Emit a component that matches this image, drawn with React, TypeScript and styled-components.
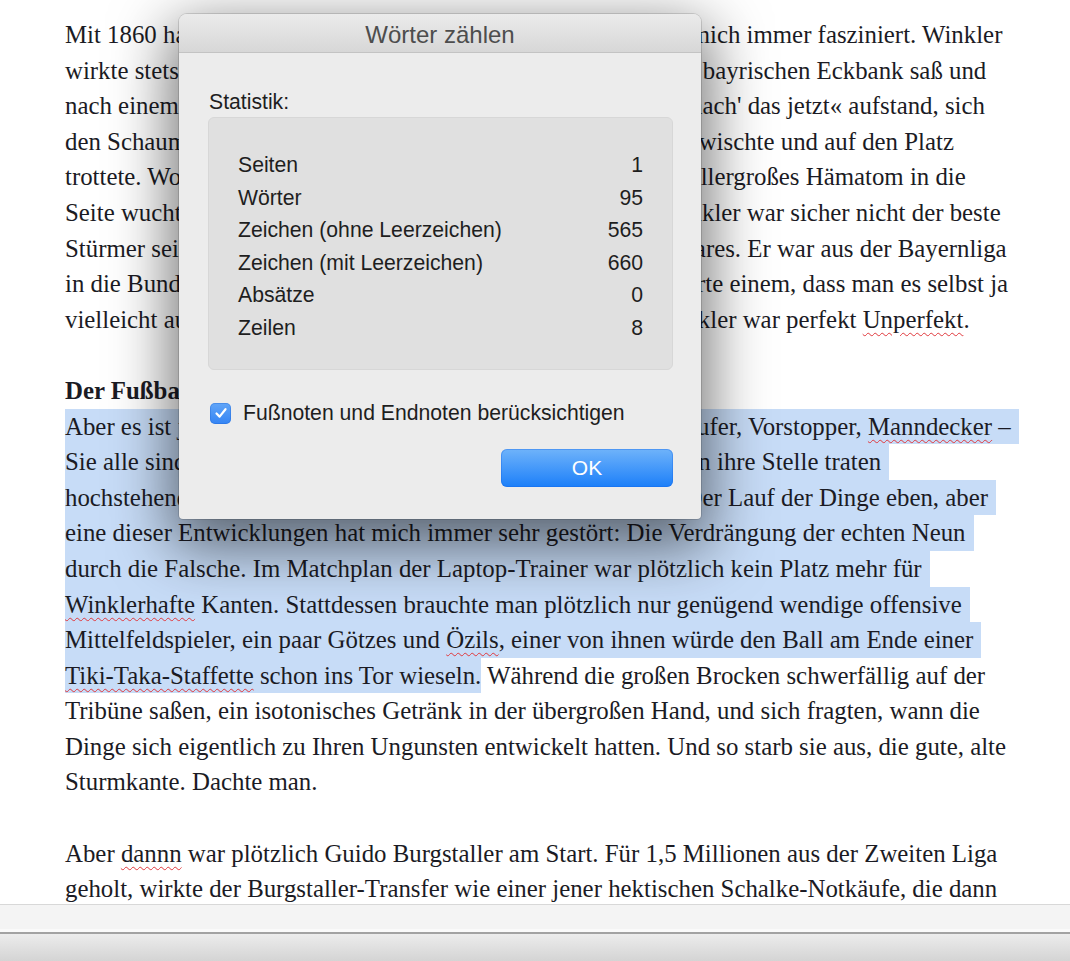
import React from "react";
import styled, { createGlobalStyle } from "styled-components";

const GlobalStyle = createGlobalStyle`
  html, body {
    margin: 0;
    padding: 0;
    background: #fff;
  }
  body {
    width: 1070px;
    height: 961px;
    overflow: hidden;
  }
`;

const Window = styled.div`
  position: relative;
  width: 1070px;
  height: 961px;
  display: flex;
  flex-direction: column;
  background: #fff;
  overflow: hidden;
`;

const Page = styled.div`
  flex: 0 0 905px;
  box-sizing: border-box;
  overflow: hidden;
  padding: 17px 0 0 65px;
  border-bottom: 1px solid #d8d8d8;
  font-family: "Liberation Serif", "Times New Roman", serif;
  font-size: 24.85px;
  line-height: 35.6px;
  color: #1b1b24;
`;

const Line = styled.div<{ $selected?: boolean; $bold?: boolean }>`
  width: fit-content;
  height: 35.6px;
  white-space: pre;
  padding-right: ${(p) => (p.$selected ? "8px" : "0")};
  background: ${(p) => (p.$selected ? "#c7dcf7" : "transparent")};
  font-weight: ${(p) => (p.$bold ? 700 : 400)};
`;

const Selection = styled.span`
  display: inline-block;
  background: #c7dcf7;
`;

const Typo = styled.span`
  text-decoration: underline wavy #e0383c;
  text-decoration-thickness: 1px;
  text-underline-offset: 4px;
`;

const StatusStrip = styled.div`
  flex: 0 0 27px;
  background: #f4f4f4;
  border-bottom: 2px solid #a2a2a2;
  box-shadow: inset 0 -3px 0 #fafafa;
`;

const BottomBar = styled.div`
  flex: 1;
  background: linear-gradient(#ececec, #d4d4d4);
`;

const Sheet = styled.div`
  position: absolute;
  left: 179px;
  top: 14px;
  width: 522px;
  height: 505px;
  display: flex;
  flex-direction: column;
  background: #ececec;
  border-radius: 8px 8px 4px 4px;
  box-shadow: 0 0 0 1px rgba(0, 0, 0, 0.13), 0 20px 60px 8px rgba(0, 0, 0, 0.55);
  font-family: "Liberation Sans", Arial, sans-serif;
  color: #1e1e1e;
  overflow: hidden;
`;

const TitleBar = styled.div`
  flex: 0 0 39px;
  box-sizing: border-box;
  padding-top: 3px;
  display: flex;
  align-items: center;
  justify-content: center;
  border-bottom: 1px solid #c3c3c3;
  background: linear-gradient(#ebebeb, #d7d7d7);
  font-size: 24px;
  color: #4d4d4d;
`;

const SheetBody = styled.div`
  flex: 1;
  display: flex;
  flex-direction: column;
  padding: 37px 28px 32px 29px;
  font-size: 21.2px;
`;

const SectionLabel = styled.div`
  line-height: 24px;
  margin: 0 0 3px 1px;
`;

const StatsBox = styled.div`
  height: 253px;
  box-sizing: border-box;
  padding: 31px 29px 0;
  background: #e0e0e0;
  border: 1px solid #d7d7d7;
  border-radius: 6px;
`;

const StatRow = styled.div`
  display: flex;
  justify-content: space-between;
  line-height: 32.6px;
`;

const CheckRow = styled.label`
  margin: 31px 0 0 2px;
  height: 24px;
  display: flex;
  align-items: center;
  gap: 12px;
`;

const CheckBox = styled.span`
  width: 21px;
  height: 21px;
  border-radius: 5px;
  display: flex;
  align-items: center;
  justify-content: center;
  background: linear-gradient(#62a6f8, #3484f4);
  box-shadow: inset 0 0 0 1px rgba(30, 100, 210, 0.35);
`;

const ButtonRow = styled.div`
  margin-top: 24px;
  display: flex;
  justify-content: flex-end;
`;

const PrimaryButton = styled.button`
  width: 172px;
  height: 38px;
  border: none;
  border-radius: 6px;
  background: linear-gradient(#6fb3fa, #1c7ff9);
  box-shadow: inset 0 0 0 1px rgba(20, 100, 230, 0.35);
  font-family: "Liberation Sans", Arial, sans-serif;
  font-size: 21px;
  color: #fff;
`;

const stats: [string, number][] = [
  ["Seiten", 1],
  ["Wörter", 95],
  ["Zeichen (ohne Leerzeichen)", 565],
  ["Zeichen (mit Leerzeichen)", 660],
  ["Absätze", 0],
  ["Zeilen", 8],
];

export default function App() {
  return (
    <Window>
      <GlobalStyle />
      <Page>
        <Line>Mit 1860 hatte ich nie viel am Hut, aber Bernhard Winkler hat mich immer fasziniert. Winkler</Line>
        <Line>wirkte stets so, als ob er gerade erst mit einem Weißbier auf der bayrischen Eckbank saß und</Line>
        <Line>nach einem letzten Schluck und einem brummigen »Na, dann mach' das jetzt« aufstand, sich</Line>
        <Line>den Schaum des Weißbiers aus seinem gewaltigen Schnauzbart wischte und auf den Platz</Line>
        <Line>trottete. Wo er dann kurz darauf dem gegnerischen Libero ein tellergroßes Hämatom in die</Line>
        <Line>Seite wuchtete, das man noch Wochen später sehen konnte. Winkler war sicher nicht der beste</Line>
        <Line>Stürmer seiner Epoche, doch er besaß etwas Ehrliches, etwas Rares. Er war aus der Bayernliga</Line>
        <Line>in die Bundesliga durchgestartet, und seine Spielweise suggerierte einem, dass man es selbst ja</Line>
        <Line>
          vielleicht auch noch bis in die Bundesliga schaffen könnte. Winkler war perfekt <Typo>Unperfekt</Typo>.
        </Line>
        <Line />
        <Line $bold>Der Fußball und die falsche Neun</Line>
        <Line $selected>
          Aber es ist ja nicht nur die Neun ausgestorben. Libero, Außenläufer, Vorstopper, <Typo>Manndecker</Typo> –
        </Line>
        <Line $selected>Sie alle sind nach und nach aus dem Spiel verschwunden, und an ihre Stelle traten</Line>
        <Line $selected>hochstehende Außenverteidiger und moderne Doppelsechsen. Der Lauf der Dinge eben, aber</Line>
        <Line $selected>eine dieser Entwicklungen hat mich immer sehr gestört: Die Verdrängung der echten Neun</Line>
        <Line $selected>durch die Falsche. Im Matchplan der Laptop-Trainer war plötzlich kein Platz mehr für</Line>
        <Line $selected>
          <Typo>Winklerhafte</Typo> Kanten. Stattdessen brauchte man plötzlich nur genügend wendige offensive
        </Line>
        <Line $selected>
          Mittelfeldspieler, ein paar Götzes und <Typo>Özils</Typo>, einer von ihnen würde den Ball am Ende einer
        </Line>
        <Line>
          <Selection>
            <Typo>Tiki-Taka-Staffette</Typo> schon ins Tor wieseln.
          </Selection>{" "}
          Während die großen Brocken schwerfällig auf der
        </Line>
        <Line>Tribüne saßen, ein isotonisches Getränk in der übergroßen Hand, und sich fragten, wann die</Line>
        <Line>Dinge sich eigentlich zu Ihren Ungunsten entwickelt hatten. Und so starb sie aus, die gute, alte</Line>
        <Line>Sturmkante. Dachte man.</Line>
        <Line />
        <Line>
          Aber <Typo>dannn</Typo> war plötzlich Guido Burgstaller am Start. Für 1,5 Millionen aus der Zweiten Liga
        </Line>
        <Line>geholt, wirkte der Burgstaller-Transfer wie einer jener hektischen Schalke-Notkäufe, die dann</Line>
      </Page>
      <StatusStrip />
      <BottomBar />

      <Sheet>
        <TitleBar>Wörter zählen</TitleBar>
        <SheetBody>
          <SectionLabel>Statistik:</SectionLabel>
          <StatsBox>
            {stats.map(([label, value]) => (
              <StatRow key={label}>
                <span>{label}</span>
                <span>{value}</span>
              </StatRow>
            ))}
          </StatsBox>
          <CheckRow>
            <CheckBox>
              <svg width="14" height="14" viewBox="0 0 14 14">
                <path d="M2.5 7.5 L5.6 10.6 L11.5 3.2" fill="none" stroke="#fff" strokeWidth="2.2" strokeLinecap="round" strokeLinejoin="round" />
              </svg>
            </CheckBox>
            Fußnoten und Endnoten berücksichtigen
          </CheckRow>
          <ButtonRow>
            <PrimaryButton>OK</PrimaryButton>
          </ButtonRow>
        </SheetBody>
      </Sheet>
    </Window>
  );
}
